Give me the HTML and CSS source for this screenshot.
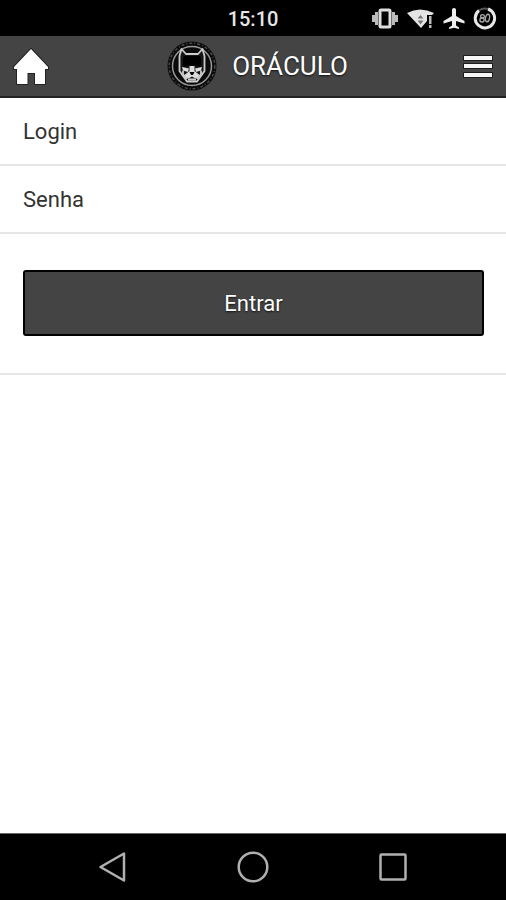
FILE: index.html
```html
<!DOCTYPE html>
<html lang="pt-BR">
<head>
<meta charset="utf-8">
<meta name="viewport" content="width=device-width, initial-scale=1">
<title>ORÁCULO</title>
<link rel="stylesheet" href="styles.css">
</head>
<body>
<div class="status-bar">
  <time class="clock">15:10</time>
  <div class="status-icons">
    <svg width="28" height="24" viewBox="0 0 28 24" aria-hidden="true">
      <path d="M1 8h3v7H1zM4 5h3v13H4zM21 5h3v13h-3zM24 8h3v7h-3z" fill="#bbb"/>
      <rect x="9" y="3" width="10" height="17" rx="1" fill="none" stroke="#ddd" stroke-width="3"/>
    </svg>
    <svg width="28" height="24" viewBox="0 0 28 24" aria-hidden="true">
      <path d="M0 6Q13-1 27 6L25 8H20V14L14 21Z" fill="#e4e4e4"/>
      <path d="M10.500 11.500L13.500 8l3 3.500zM10.500 13.500h6l-3 4z" fill="#777"/>
      <path d="M22 9h2.500v8H22zM22 18h2.500v3H22z" fill="#bbb"/>
    </svg>
    <svg width="22" height="24" viewBox="0 0 22 24" aria-hidden="true">
      <path d="M11 1c1.200 0 2 .9 2 2V9l8.500 5V16.500L13 14V18.500l3 2v1.500l-5-1.300-5 1.300V20.500l3-2v-4.500L.5 16.500v-2.500L9 9V3c0-1.100.8-2 2-2z" fill="#eee"/>
    </svg>
    <svg width="24" height="24" viewBox="0 0 24 24" aria-hidden="true">
      <path d="M15 2A9.700 9.700 0 1 1 6 3.500" fill="none" stroke="#e8e8e8" stroke-width="3"/>
      <path d="M6 3.500A9.700 9.700 0 0 1 15 2" fill="none" stroke="#555" stroke-width="2"/>
      <g fill="none" stroke="#aaa" stroke-width="1.300"><ellipse cx="9.500" cy="9.300" rx="1.900" ry="1.700"/><ellipse cx="9" cy="13" rx="2.100" ry="2"/><ellipse cx="14.500" cy="11" rx="2" ry="3.800" transform="rotate(10 14.500 11)"/></g>
    </svg>
  </div>
</div>
<header class="app-header">
  <a class="home-link" href="#" aria-label="Início">
    <svg width="36" height="38" viewBox="0 0 36 38" aria-hidden="true">
      <path d="M18 2L35 20V22H32V37H22V26H14.500V37H4V22H1V20Z" fill="#fff" stroke="#222" stroke-width="2" stroke-linejoin="round" paint-order="stroke"/>
    </svg>
  </a>
  <div class="brand">
    <svg width="50" height="50" viewBox="0 0 50 50" aria-hidden="true">
      <circle cx="25" cy="25" r="24.500" fill="#0b0b0b"/>
      <circle cx="25" cy="25" r="22.800" fill="none" stroke="#484848" stroke-width="1.500" stroke-dasharray="3 2 1 2"/>
      <circle cx="25" cy="25" r="19.500" fill="none" stroke="#999" stroke-width="1.500"/>
      <path d="M14.500 8L12.500 15v15l3.500 5 4 5.500h10l4-5.500 3.500-5V15L35.500 8 31 13H19Z" fill="#161616" stroke="#ccc" stroke-width="1.800" stroke-linejoin="round"/>
      <path d="M17 15H33L34 18V26L29 24.500H21L16 26V18Z" fill="#000"/>
      <path d="M15 26l7 1.500-1 3.500-5-1.500zM35 26l-7 1.500 1 3.500 5-1.500zM22.500 25h5v5l5 4-1 4-4-1-2.500-1.500-2.500 1.500-4 1-1-4 5-4z" fill="#ddd"/>
      <path d="M16 29.500v4l4 4M34 29.500v4l-4 4M21 38.500h8" fill="none" stroke="#ccc" stroke-width="1.800"/>
      <path d="M22.500 31h5l-1.500 3h-2z" fill="#000"/>
    </svg>
    <h1 class="title">ORÁCULO</h1>
  </div>
  <button class="menu-button" type="button" aria-label="Menu">
    <svg width="32" height="26" viewBox="0 0 32 26" aria-hidden="true">
      <path d="M2 3h28v4H2zM2 11h28v4H2zM2 20h28v4H2z" fill="#f6f6f6" stroke="#1c1c1c" stroke-width="2" stroke-linejoin="round" paint-order="stroke"/>
    </svg>
  </button>
</header>
<main class="content">
  <form class="login-form">
    <input class="field" type="text" placeholder="Login" aria-label="Login">
    <input class="field" type="password" placeholder="Senha" aria-label="Senha">
    <div class="actions">
      <button class="submit" type="button">Entrar</button>
    </div>
  </form>
</main>
<nav class="system-nav" aria-label="Sistema">
  <button class="nav-button" type="button" aria-label="Voltar">
    <svg width="32" height="32" viewBox="0 0 32 32" aria-hidden="true"><path d="M3.500 16L27 2.500V29.500Z"/></svg>
  </button>
  <button class="nav-button" type="button" aria-label="Tela inicial">
    <svg width="32" height="32" viewBox="0 0 32 32" aria-hidden="true"><circle cx="16" cy="16" r="14.300"/></svg>
  </button>
  <button class="nav-button" type="button" aria-label="Recentes">
    <svg width="32" height="32" viewBox="0 0 32 32" aria-hidden="true"><rect x="3.500" y="3.500" width="25" height="25" rx="1"/></svg>
  </button>
</nav>
</body>
</html>
```
FILE: styles.css
```css
* {
  box-sizing: border-box;
}

body {
  margin: 0;
  min-height: 100vh;
  display: flex;
  flex-direction: column;
  background: #fff;
  font-family: Roboto, "Liberation Sans", sans-serif;
}

svg {
  display: block;
}

button {
  font-family: inherit;
  cursor: pointer;
}

.status-bar {
  display: grid;
  grid-template-columns: 1fr auto 1fr;
  align-items: center;
  height: 36px;
  padding: 2px 9px 0;
  background: #000;
  color: #e6e6e6;
}

.clock {
  grid-column: 2;
  font-size: 20px;
  font-weight: 500;
  line-height: 34px;
}

.status-icons {
  display: flex;
  justify-content: flex-end;
  gap: 8px;
}

.app-header {
  display: grid;
  grid-template-columns: 1fr auto 1fr;
  align-items: center;
  height: 62px;
  padding: 0 12px 0 13px;
  background: #444;
  border-bottom: 2px solid #222;
}

.home-link {
  justify-self: start;
}

.brand {
  display: flex;
  align-items: center;
  gap: 15px;
  padding-left: 8px;
}

.title {
  margin: 0;
  font-size: 26px;
  font-weight: 400;
  line-height: 32px;
  color: #fff;
  text-shadow: 0 1px 2px #111;
}

.menu-button {
  justify-self: end;
  padding: 0;
  border: 0;
  background: none;
}

.content {
  flex: 1;
}

.field {
  display: block;
  width: 100%;
  height: 68px;
  padding: 0 23px;
  border: 0;
  border-bottom: 2px solid #e6e6e6;
  border-radius: 0;
  background: #fff;
  color: #333;
  font-family: inherit;
  font-size: 22px;
}

.field::placeholder {
  color: #333;
  opacity: 1;
}

.actions {
  padding: 36px 22px 37px 23px;
  border-bottom: 2px solid #e6e6e6;
}

.submit {
  display: block;
  width: 100%;
  height: 66px;
  border: 2px solid #000;
  border-radius: 3px;
  background: #444;
  color: #fff;
  font-size: 22px;
  text-shadow: 0 1px 2px #111;
}

.system-nav {
  display: flex;
  justify-content: center;
  align-items: center;
  gap: 108px;
  height: 67px;
  background: #000;
  border-top: 1px solid #666;
}

.nav-button {
  padding: 0;
  border: 0;
  background: none;
}

.nav-button svg {
  fill: none;
  stroke: #b0b0b0;
  stroke-width: 2.5;
  stroke-linejoin: round;
}
```
